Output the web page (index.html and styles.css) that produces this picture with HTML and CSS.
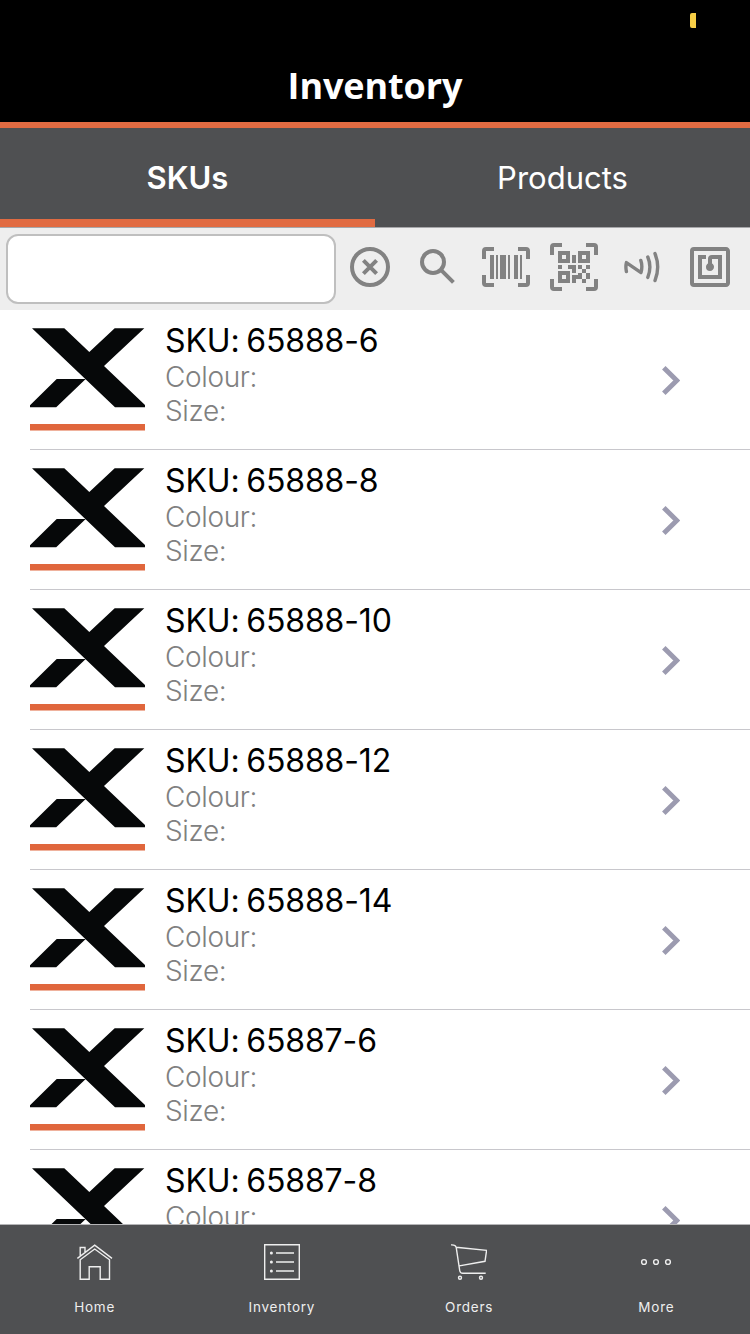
FILE: index.html
```
<!DOCTYPE html>
<html lang="en">
<head>
  <meta charset="UTF-8" />
  <title>Inventory</title>
  <link rel="stylesheet" href="styles.css">
</head>
<body>

  <svg class="defs">
    <symbol id="logo" viewBox="0 0 115 104">
      <path fill="#060809" d="M2 .3H34.3L59.3 24 84.7.3H114.3L74 38 115 77V79.2H85ZM26.7 51H55.7L26.2 79.2H0V77.2Z" />
      <path fill="#e0663c" d="M0 96.1H115V102.4H0Z" />
    </symbol>
    <symbol id="chevron" viewBox="0 0 20 32">
      <path d="M3.8 3.8 16.8 16.5 3.8 29.2" fill="none" stroke="#9c9bb0" stroke-width="5" />
    </symbol>
  </svg>

  <header>
    <div class="battery"></div>
    <h1>Inventory</h1>
  </header>

  <div class="tabs">
    <div class="tab active">SKUs</div>
    <div class="tab">Products</div>
  </div>

  <div class="search-bar">
    <input type="text" class="search-input">
    <div class="search-icons">
      <svg viewBox="0 0 24 24" class="line"><circle cx="12" cy="12" r="9" /><path d="M8.7 8.7 15.3 15.3M15.3 8.7 8.7 15.3" /></svg>
      <svg viewBox="0 0 24 24" class="line"><circle cx="9.5" cy="9.5" r="5.5" /><path d="M13.7 13.7 19.7 19.7" /></svg>
      <svg viewBox="0 0 24 24"><path d="M4,6H6V18H4V6M7,6H8V18H7V6M9,6H12V18H9V6M13,6H14V18H13V6M16,6H18V18H16V6M19,6H20V18H19V6M2,4V8H0V4A2,2 0 0,1 2,2H6V4H2M22,2A2,2 0 0,1 24,4V8H22V4H18V2H22M2,16V20H6V22H2A2,2 0 0,1 0,20V16H2M22,20V16H24V20A2,2 0 0,1 22,22H18V20H22Z" /></svg>
      <svg viewBox="0 0 24 24"><path d="M4,4H10V10H4V4M20,4V10H14V4H20M14,15H16V13H14V11H16V13H18V11H20V13H18V15H20V18H18V20H16V18H13V20H11V16H14V15M16,15V18H18V15H16M4,20V14H10V20H4M6,6V8H8V6H6M16,6V8H18V6H16M6,16V18H8V16H6M4,11H6V13H4V11M9,11H13V15H11V13H9V11M11,6H13V10H11V6M2,2V6H0V2A2,2 0 0,1 2,0H6V2H2M22,0A2,2 0 0,1 24,2V6H22V2H18V0H22M2,18V22H6V24H2A2,2 0 0,1 0,22V18H2M22,22V18H24V22A2,2 0 0,1 22,24H18V22H22Z" /></svg>
      <svg viewBox="0 0 24 24" class="line round"><path d="M4.2 14.3Q3.7 12 4.2 9.8L11.5 14.8Q12.4 11.5 11.4 8.7M14.9 7Q17 12 14.9 17.2M18.5 5.3Q21.2 12 18.5 18.8" /></svg>
      <svg viewBox="0 0 24 24"><path d="M18,6H13A2,2 0 0,0 11,8V10.28C10.41,10.62 10,11.26 10,12A2,2 0 0,0 12,14C13.11,14 14,13.1 14,12C14,11.26 13.6,10.62 13,10.28V8H16V16H8V8H10V6H8L6,6V18H18M20,20H4V4H20M20,2H4A2,2 0 0,0 2,4V20A2,2 0 0,0 4,22H20C21.11,22 22,21.1 22,20V4C22,2.89 21.11,2 20,2Z" /></svg>
    </div>
  </div>

  <main class="list">
    <div class="item">
      <svg class="logo"><use href="#logo" /></svg>
      <div class="info"><h2>SKU: 65888-6</h2><p>Colour:</p><p>Size:</p></div>
      <svg class="chevron"><use href="#chevron" /></svg>
    </div>
    <div class="item">
      <svg class="logo"><use href="#logo" /></svg>
      <div class="info"><h2>SKU: 65888-8</h2><p>Colour:</p><p>Size:</p></div>
      <svg class="chevron"><use href="#chevron" /></svg>
    </div>
    <div class="item">
      <svg class="logo"><use href="#logo" /></svg>
      <div class="info"><h2>SKU: 65888-10</h2><p>Colour:</p><p>Size:</p></div>
      <svg class="chevron"><use href="#chevron" /></svg>
    </div>
    <div class="item">
      <svg class="logo"><use href="#logo" /></svg>
      <div class="info"><h2>SKU: 65888-12</h2><p>Colour:</p><p>Size:</p></div>
      <svg class="chevron"><use href="#chevron" /></svg>
    </div>
    <div class="item">
      <svg class="logo"><use href="#logo" /></svg>
      <div class="info"><h2>SKU: 65888-14</h2><p>Colour:</p><p>Size:</p></div>
      <svg class="chevron"><use href="#chevron" /></svg>
    </div>
    <div class="item">
      <svg class="logo"><use href="#logo" /></svg>
      <div class="info"><h2>SKU: 65887-6</h2><p>Colour:</p><p>Size:</p></div>
      <svg class="chevron"><use href="#chevron" /></svg>
    </div>
    <div class="item">
      <svg class="logo"><use href="#logo" /></svg>
      <div class="info"><h2>SKU: 65887-8</h2><p>Colour:</p></div>
      <svg class="chevron"><use href="#chevron" /></svg>
    </div>
  </main>

  <nav>
    <a class="nav-item">
      <svg viewBox="0 0 36 36"><path d="M.4 14.4 17.7 1.2 35 14.4M3.2 12V3.5H8V8.5M3.2 15.8 17.7 5 32.5 15.8V35.3H23.2V22.7H12.2V35.3H3.2Z" /></svg>
      <span>Home</span>
    </a>
    <a class="nav-item">
      <svg viewBox="0 0 36 36"><path d="M.7.7H35.3V35.3H.7ZM12 9H30M12 18H30M12 27H30" /><g class="dots"><circle cx="7.4" cy="9" r="1.5" /><circle cx="7.4" cy="18" r="1.5" /><circle cx="7.4" cy="27" r="1.5" /></g></svg>
      <span>Inventory</span>
    </a>
    <a class="nav-item">
      <svg viewBox="0 0 36 36"><path d="M0 .9Q4.6.6 5.2 3.3L35.6 6.4 34 17.3 8.3 21.9M5.2 3.3 8.7 26.5Q9.2 29.3 11.7 29.3H34.7" /><circle cx="9" cy="33.7" r="1.5" /><circle cx="30" cy="33.7" r="1.5" /></svg>
      <span>Orders</span>
    </a>
    <a class="nav-item">
      <svg viewBox="0 0 36 36"><circle cx="6" cy="18" r="2.4" /><circle cx="18" cy="18" r="2.4" /><circle cx="30" cy="18" r="2.4" /></svg>
      <span>More</span>
    </a>
  </nav>

</body>
</html>
```
FILE: styles.css
```
* {
  box-sizing: border-box;
}

html, body {
  margin: 0;
  padding: 0;
  height: 1334px;
  overflow: hidden;
  background: white;
  font-family: Inter, 'Liberation Sans', sans-serif;
}

body {
  width: 750px;
  display: flex;
  flex-direction: column;
}

h1, h2, p {
  margin: 0;
}

.defs {
  display: none;
}

header {
  height: 128px;
  flex: none;
  background: black;
  border-bottom: 6px solid #e16b42;
  padding-top: 13px;
  display: flex;
  flex-direction: column;
}

.battery {
  width: 6px;
  height: 15px;
  margin-left: 690px;
  background: #f7ce46;
  border-radius: 2px 0 0 2px;
}

header h1 {
  margin-top: 34px;
  color: white;
  font-family: 'Open Sans', sans-serif;
  font-size: 36px;
  font-weight: bold;
  letter-spacing: -0.1px;
  line-height: 48px;
  text-align: center;
}

.tabs {
  display: flex;
  height: 100px;
  flex: none;
  background: #4f5052;
  border-bottom: 1px solid #a7a7aa;
}

.tab {
  flex: 1;
  color: white;
  font-size: 31px;
  line-height: 100px;
  text-align: center;
}

.tab.active {
  font-weight: 600;
  border-bottom: 8px solid #e16b42;
}

.search-bar {
  height: 82px;
  flex: none;
  padding: 6px;
  display: flex;
  gap: 10px;
  background: #eee;
}

.search-input {
  width: 330px;
  height: 70px;
  border: 2px solid #bfbfbf;
  border-radius: 12px;
  background: white;
}

.search-icons {
  display: flex;
  gap: 20px;
  padding-top: 9px;
}

.search-icons svg {
  width: 48px;
  height: 48px;
  fill: #828282;
}

.search-icons .line {
  fill: none;
  stroke: #828282;
  stroke-width: 2;
}

.search-icons .round {
  stroke-width: 1.7;
  stroke-linecap: round;
  stroke-linejoin: round;
}

.list {
  flex: 1;
  min-height: 0;
  padding-left: 30px;
  overflow: hidden;
}

.item {
  height: 140px;
  display: flex;
  border-bottom: 1px solid #c8c7cc;
}

.logo {
  width: 115px;
  height: 104px;
  margin: 18px 20px 0 0;
}

.info {
  flex: 1;
  padding-top: 11px;
}

.info h2 {
  font-size: 32px;
  font-weight: 400;
  letter-spacing: -0.15px;
  word-spacing: -2px;
  line-height: 39px;
  color: black;
}

.info p {
  font-size: 28px;
  font-weight: 300;
  letter-spacing: -0.35px;
  line-height: 34px;
  color: #808080;
}

.chevron {
  width: 20px;
  height: 32px;
  margin: 54px 70px 0 0;
}

nav {
  height: 110px;
  flex: none;
  padding-left: 1px;
  display: flex;
  background: #4f5052;
  border-top: 1px solid #b5b5b7;
}

.nav-item {
  flex: 1;
  padding-top: 19px;
  display: flex;
  flex-direction: column;
  align-items: center;
  gap: 17px;
  color: #eee;
  font-size: 13.5px;
  letter-spacing: 0.75px;
  line-height: 20px;
}

.nav-item svg {
  width: 36px;
  height: 36px;
  fill: none;
  stroke: #eee;
  stroke-width: 1.4;
}

.nav-item .dots {
  fill: #eee;
  stroke: none;
}
```
